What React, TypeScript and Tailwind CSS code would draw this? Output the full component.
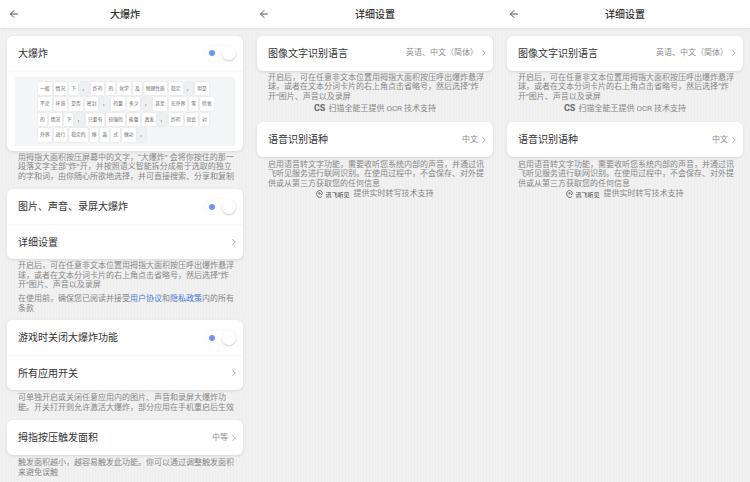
import { ArrowLeft, ChevronRight } from 'lucide-react';
import type { ReactNode } from 'react';

const tileRows = [
  ['一般', '情况', '下', '，', '炸药', '的', '化学', '及', '物理性质', '稳定', '，', '但是'],
  ['不论', '环境', '是否', '密封', '，', '药量', '多少', '，', '甚至', '在外界', '零', '供氧'],
  ['的', '情况', '下', '，', '只要有', '较强的', '能量', '激发', '，', '炸药', '就会', '对'],
  ['外界', '进行', '稳定的', '爆', '轰', '式', '做功', '，'],
];

function Header({ title }: { title: string }) {
  return (
    <header className="relative z-10 flex h-[28px] shrink-0 items-center justify-center bg-white shadow-[0_1px_2px_rgba(0,0,0,0.08)]">
      <ArrowLeft className="absolute left-[8px] top-[8px] h-[12px] w-[12px] text-[#555]" strokeWidth={2} />
      <h1 className="text-[10px] font-medium text-[#333]">{title}</h1>
    </header>
  );
}

function Toggle() {
  return (
    <div className="flex h-[15px] w-[31px] items-center justify-between rounded-full bg-white pl-[4px] shadow-[0_0_2px_rgba(0,0,0,0.08)]">
      <span className="h-[6px] w-[6px] rounded-full bg-[#6e96f5]" />
      <span className="h-[14px] w-[14px] rounded-full bg-white shadow-[0_1px_2px_rgba(0,0,0,0.2)]" />
    </div>
  );
}

function Row({ label, value, toggle }: { label: string; value?: string; toggle?: boolean }) {
  return (
    <div className="flex h-[34.5px] items-center justify-between pl-[11px] pr-[7px]">
      <span className="text-[10px] text-[#333]">{label}</span>
      {toggle ? (
        <Toggle />
      ) : (
        <span className="-mr-[3px] flex items-center gap-[1px] text-[8px] text-[#8c8c8c]">
          {value}
          <ChevronRight className="h-[10px] w-[10px] text-[#777]" strokeWidth={1.6} />
        </span>
      )}
    </div>
  );
}

function Card({ children }: { children: ReactNode }) {
  return <section className="mx-[7px] overflow-hidden rounded-[6px] bg-white shadow-[0_1px_3px_rgba(0,0,0,0.1)]">{children}</section>;
}

function Note({ children, className = '' }: { children: ReactNode; className?: string }) {
  return <p className={`pl-[18px] pr-[14px] text-[8px] leading-[9.6px] text-[#868686] ${className}`}>{children}</p>;
}

function Preview() {
  return (
    <div className="mx-[8px] mb-[5px] mt-[5px] flex h-[69px] flex-col gap-[2px] bg-[#f4f5f7] pl-[23px] pt-[5px]">
      {tileRows.map((row, i) => (
        <div key={i} className="flex gap-[2px]">
          {row.map((word, j) => (
            <span
              key={j}
              className={`flex h-[13.5px] items-center rounded-[1px] px-[2px] text-[4.8px] text-[#666] shadow-[0_0_2px_rgba(0,0,0,0.12)] ${word === '，' ? 'bg-[#eff0f2]' : 'bg-white'}`}
            >
              {word}
            </span>
          ))}
        </div>
      ))}
    </div>
  );
}

function MainPanel() {
  return (
    <Panel title="大爆炸">
      <div className="h-[8px]" />
      <Card>
        <Row label="大爆炸" toggle />
        <div className="h-px bg-[#f8f8f8]" />
        <Preview />
      </Card>
      <Note className="mt-[2px]">用拇指大面积按压屏幕中的文字，“大爆炸” 会将你按住的那一段落文字全部“炸”开，并按照语义智能拆分成易于选取的独立的字和词，由你随心所欲地选择，并可直接搜索、分享和复制</Note>
      <div className="h-[8px]" />
      <Card>
        <Row label="图片、声音、录屏大爆炸" toggle />
        <div className="h-px bg-[#f8f8f8]" />
        <Row label="详细设置" />
      </Card>
      <Note className="mt-[2px]">开启后，可在任意非文本位置用拇指大面积按压呼出爆炸悬浮球，或者在文本分词卡片的右上角点击省略号，然后选择“炸开”图片、声音以及录屏</Note>
      <Note className="mt-[4px]">
        在使用前，确保您已阅读并接受<span className="text-[#4a78d8]">用户协议</span>和<span className="text-[#4a78d8]">隐私政策</span>内的所有条款
      </Note>
      <div className="h-[7px]" />
      <Card>
        <Row label="游戏时关闭大爆炸功能" toggle />
        <div className="h-px bg-[#f8f8f8]" />
        <Row label="所有应用开关" />
      </Card>
      <Note className="mt-[3px]">可单独开启或关闭任意应用内的图片、声音和录屏大爆炸功能。开关打开则允许激活大爆炸，部分应用在手机重启后生效</Note>
      <div className="h-[8px]" />
      <Card>
        <Row label="拇指按压触发面积" value="中等" />
      </Card>
      <Note className="mt-[3px]">触发面积越小，越容易触发此功能。你可以通过调整触发面积来避免误触</Note>
    </Panel>
  );
}

function DetailPanel() {
  return (
    <Panel title="详细设置">
      <div className="h-[8px]" />
      <Card>
        <Row label="图像文字识别语言" value="英语、中文（简体）" />
      </Card>
      <Note className="mt-[2px]">开启后，可在任意非文本位置用拇指大面积按压呼出爆炸悬浮球，或者在文本分词卡片的右上角点击省略号，然后选择“炸开”图片、声音以及录屏</Note>
      <div className="mt-[2px] flex h-[11px] items-center justify-center gap-[3px] text-[8px] text-[#868686]">
        <b className="text-[9px] text-[#666]">CS</b>
        扫描全能王提供 OCR 技术支持
      </div>
      <div className="h-[8px]" />
      <Card>
        <Row label="语音识别语种" value="中文" />
      </Card>
      <Note className="mt-[3px]">启用语音转文字功能，需要收听您系统内部的声音，并通过讯飞听见服务进行联网识别。在使用过程中，不会保存、对外提供或从第三方获取您的任何信息</Note>
      <div className="flex h-[11px] items-center justify-center gap-[4px] text-[8px] text-[#868686]">
        <span className="flex items-center gap-[2px] text-[6px] font-medium text-[#555]">
          <svg viewBox="0 0 10 12" className="h-[10px] w-[7px]" fill="none" stroke="#555" strokeWidth="1.3">
            <path d="M8.5 9.5C7 11 5.5 11 4 10.6 2 10 1 8 1 5.5 1 3 3 1 5 1s4 1.7 4 4c0 1.4-.8 2-2 2.2" />
            <circle cx="5" cy="5" r="1" />
          </svg>
          讯飞听见
        </span>
        提供实时转写技术支持
      </div>
    </Panel>
  );
}

function Panel({ title, children }: { title: string; children: ReactNode }) {
  return (
    <div className="flex h-[482px] w-[250px] shrink-0 flex-col overflow-hidden bg-[repeating-linear-gradient(90deg,#f1f1f1_0px,#f1f1f1_2px,#eeeeee_2px,#eeeeee_3px)]">
      <Header title={title} />
      <div>{children}</div>
    </div>
  );
}

export default function App() {
  return (
    <div className="flex w-[750px] font-['Roboto','Noto_Sans_CJK_SC',sans-serif]">
      <MainPanel />
      <DetailPanel />
      <DetailPanel />
    </div>
  );
}
